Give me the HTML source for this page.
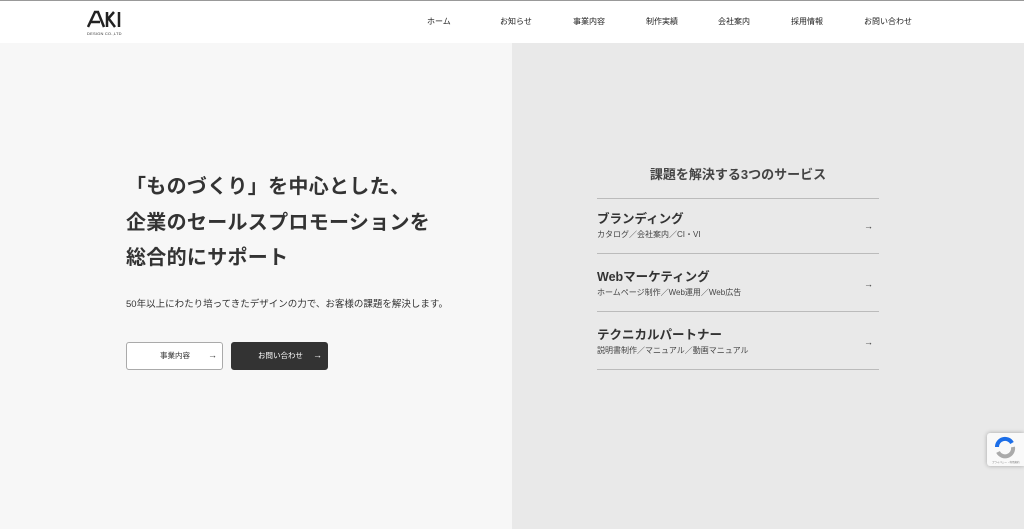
<!DOCTYPE html>
<html lang="ja"><head><meta charset="utf-8">
<style>
*{margin:0;padding:0;box-sizing:border-box}
body{width:1024px;height:529px;overflow:hidden;font-family:"Liberation Sans","Noto Sans CJK JP",sans-serif;color:#333;background:#f7f7f7;position:relative}
.top{position:absolute;top:0;left:0;width:1024px;height:1px;background:#999}
header{position:absolute;top:1px;left:0;width:1024px;height:42px;background:#fff}
.logo{position:absolute;left:87px;top:9px}
nav a{position:absolute;top:15px;font-size:8px;color:#222;text-decoration:none}
.left{position:absolute;top:43px;left:0;width:512px;height:486px;background:#f7f7f7}
.right{position:absolute;top:43px;left:512px;width:512px;height:486px;background:#e9e9e9}
h1{position:absolute;left:126px;top:170px;font-size:20px;line-height:35.5px;font-weight:bold;color:#333;letter-spacing:0.3px}
.sub{position:absolute;left:126px;top:296px;font-size:9.5px;color:#333}
.btn{position:absolute;top:342px;width:97px;height:28px;border-radius:3px;font-size:7.5px;line-height:26px}
.b1{left:126px;background:#fff;border:1px solid #aaa;color:#333}
.b2{left:231px;background:#333;border:1px solid #333;color:#fff}
.btn span{position:absolute}
.btn .ar{font-weight:bold;font-size:9px;top:-1px}
.svc-t{position:absolute;left:597px;width:282px;top:164px;text-align:center;font-size:13px;font-weight:bold;color:#444}
.line{position:absolute;left:597px;width:282px;height:1px;background:#bbb}
.it{position:absolute;left:597px;width:282px}
.it b{display:block;font-size:12.5px;color:#333;line-height:16px}
.it small{display:block;font-size:8px;color:#444;margin-top:2px}
.it i{position:absolute;right:6px;top:10px;font-style:normal;font-size:9px;font-weight:bold}
.rc{position:absolute;left:987px;top:433px;width:37px;height:33px;background:#f9f9f9;border-radius:3px 0 0 3px;box-shadow:0 0 4px rgba(0,0,0,.3)}
</style></head><body>
<div class="top"></div>
<header>
<div class="logo">
<div style="font-size:20px;font-weight:bold;letter-spacing:-1px;line-height:18px;color:#222;position:relative">
<svg width="36" height="18" viewBox="0 0 36 18" style="position:absolute;left:0;top:0"><path d="M1 17 L8 2 L11 2 L17 17 M4 12 L13 12" stroke="#222" stroke-width="2.5" fill="none"/><path d="M20 2 V17 M20 10 L27 2 M22 9 L28 17 M32 2 V17" stroke="#222" stroke-width="2.5" fill="none"/></svg>
&nbsp;</div>
<div style="font-size:4px;color:#333;margin-top:3px;letter-spacing:0.2px">DESIGN CO.,LTD</div>
</div>
<nav>
<a style="left:427px">ホーム</a><a style="left:500px">お知らせ</a><a style="left:573px">事業内容</a><a style="left:646px">制作実績</a><a style="left:718px">会社案内</a><a style="left:791px">採用情報</a><a style="left:864px">お問い合わせ</a>
</nav>
</header>
<div class="left"></div>
<div class="right"></div>
<h1>「ものづくり」を中心とした、<br>企業のセールスプロモーションを<br>総合的にサポート</h1>
<div class="sub">50年以上にわたり培ってきたデザインの力で、お客様の課題を解決します。</div>
<div class="btn b1"><span style="left:33px">事業内容</span><span class="ar" style="left:81px">→</span></div>
<div class="btn b2"><span style="left:26px">お問い合わせ</span><span class="ar" style="left:81px">→</span></div>
<div class="svc-t">課題を解決する3つのサービス</div>
<div class="line" style="top:198px"></div>
<div class="it" style="top:211px"><b>ブランディング</b><small>カタログ／会社案内／CI・VI</small><i>→</i></div>
<div class="line" style="top:253px"></div>
<div class="it" style="top:269px"><b>Webマーケティング</b><small>ホームページ制作／Web運用／Web広告</small><i>→</i></div>
<div class="line" style="top:311px"></div>
<div class="it" style="top:327px"><b>テクニカルパートナー</b><small>説明書制作／マニュアル／動画マニュアル</small><i>→</i></div>
<div class="line" style="top:369px"></div>
<div class="rc"><svg width="37" height="33" viewBox="0 0 37 33"><path d="M10 14 A8 8 0 0 1 25 10" stroke="#1c6ee8" stroke-width="4" fill="none"/><path d="M26 14 A8 8 0 0 1 11 19" stroke="#aaa" stroke-width="4" fill="none"/><text x="5" y="30" font-size="2.5" fill="#777" font-family="Liberation Sans, Noto Sans CJK JP, sans-serif">プライバシー・利用規約</text></svg></div>
</body></html>
